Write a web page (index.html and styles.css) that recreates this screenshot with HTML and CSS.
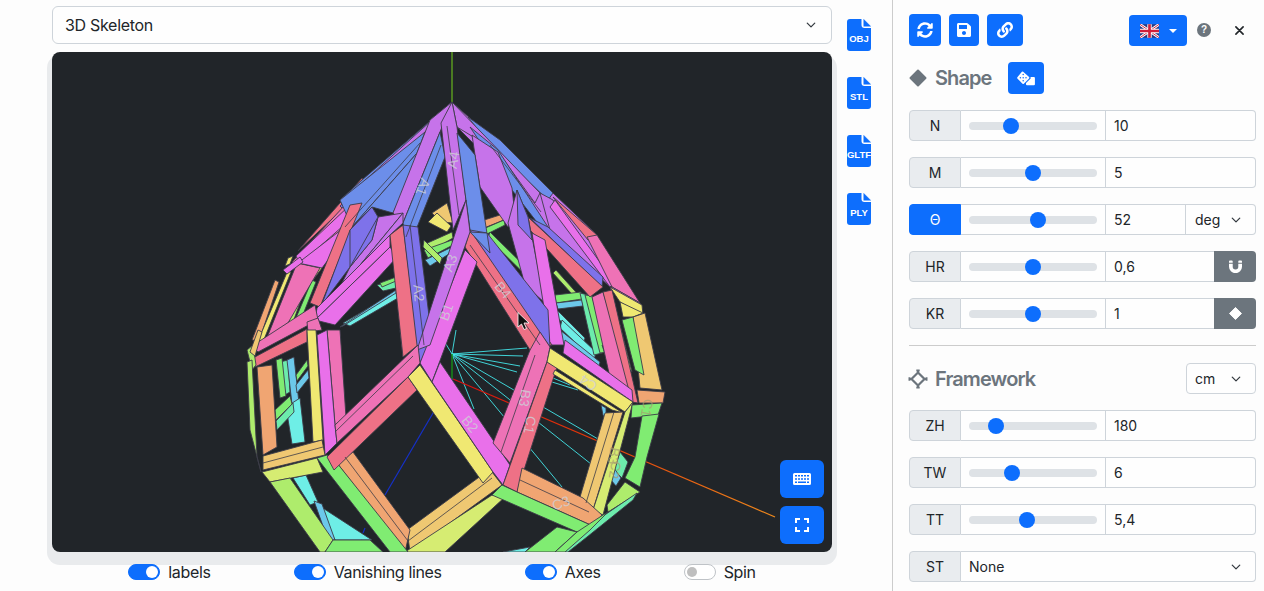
FILE: index.html
```html
<!DOCTYPE html>
<html lang="en">
<head>
<meta charset="utf-8">
<title>3D Skeleton</title>
<link rel="stylesheet" href="styles.css">
</head>
<body>
<main class="stage">
  <section class="viewer">
    <select class="form-select"><option>3D Skeleton</option></select>
    <div class="canvas">
      <svg class="scene" viewBox="52 52 780 500" xmlns="http://www.w3.org/2000/svg">
        <defs>
          <linearGradient id="xaxis" gradientUnits="userSpaceOnUse" x1="453" y1="379" x2="775" y2="517">
            <stop offset="0" stop-color="#d80d0d"/><stop offset=".45" stop-color="#e23a08"/><stop offset="1" stop-color="#ef8a1c"/>
          </linearGradient>
        </defs>
        <line class="ax-g" x1="452" y1="52" x2="452" y2="102"/>
        <g class="beams">
          <!-- far side of the skeleton -->
          <polygon class="y" points="432,213 447,203 453,223 440,222"/>
          <polygon class="e" points="428,222 437,213 451,226 447,232"/>
          <polygon class="o" points="375,228 385,225 388,232 378,236"/>
          <polygon class="e" points="373,238 378,233 380,240 375,244"/>
          <polygon class="e" points="390,208 398,199 400,203 393,212"/>
          <polygon class="n" points="423,245 452,232 453,238 427,253"/>
          <polygon class="r" points="424,250 452,240 453,245 428,258"/>
          <polygon class="u" points="425,260 452,247 452,252 430,266"/>
          <polygon class="n" points="424,240 442,258 440,264 423,247"/>
          <polygon class="t" points="377,285 396,280 396,288 383,291"/>
          <polygon class="r" points="380,283 396,277 396,281 382,287"/>
          <polygon class="c" points="343,323 396,292 398,298 350,326"/>
          <polygon class="u" points="340,327 396,290 396,293 343,326"/>
          <polygon class="o" points="310,262 328,252 330,257 312,268"/>
          <polygon class="e" points="306,278 320,262 322,268 310,284"/>
          <polygon class="n" points="288,323 306,272 310,275 292,325"/>
          <polygon class="r" points="293,325 312,280 316,282 298,327"/>
          <polygon class="o" points="478,222 503,214 504,220 484,228"/>
          <polygon class="r" points="483,229 504,220 505,225 487,234"/>
          <polygon class="r" points="490,232 556,297 553,302 488,238"/>
          <polygon class="n" points="556,270 583,300 580,303 553,273"/>
          <polygon class="r" points="555,295 581,292 582,299 556,303"/>
          <polygon class="u" points="556,303 582,300 583,306 558,309"/>
          <polygon class="c" points="557,310 585,338 583,345 555,315"/>
          <polygon class="c" points="562,320 596,352 594,360 560,328"/>
          <polygon class="u" points="560,330 600,362 598,370 558,340"/>
          <polygon class="t" points="580,293 592,296 606,352 594,355"/>
          <polygon class="r" points="585,295 592,296 607,352 600,353"/>
          <polygon class="u" points="602,345 612,355 622,395 615,385"/>
          <polygon class="t" points="608,330 620,335 632,390 622,390"/>
          <polygon class="n" points="600,320 620,325 632,372 610,350"/>
          <polygon class="u" points="601,405 606,408 606,420 603,415"/>
          <polygon class="t" points="620,452 628,462 622,478 614,470"/>
          <polygon class="u" points="614,468 621,478 616,486 611,480"/>
          <polygon class="t" points="280,362 288,360 290,392 283,396"/>
          <polygon class="r" points="276,360 282,358 286,396 280,398"/>
          <polygon class="u" points="287,360 294,357 303,440 296,440"/>
          <polygon class="c" points="286,407 300,398 305,442 292,444"/>
          <polygon class="r" points="275,410 290,396 292,404 276,420"/>
          <polygon class="t" points="276,421 293,403 294,412 277,430"/>
          <polygon class="u" points="296,385 308,370 309,378 297,393"/>
          <polygon class="r" points="296,375 307,360 308,366 297,381"/>
          <polygon class="c" points="293,478 306,475 318,502 310,505"/>
          <polygon class="c" points="315,503 372,540 335,540"/>
          <polygon class="u" points="314,501 322,504 335,540 328,540"/>
          <polygon class="c" points="503,552 530,547 525,552"/>
          <polygon class="u" points="355,545 362,540 366,552 358,552"/>
        </g>
        <g class="vlines">
          <line x1="452" y1="354" x2="527" y2="348"/>
          <line x1="452" y1="354" x2="523" y2="356"/>
          <line x1="452" y1="354" x2="520" y2="366"/>
          <line x1="452" y1="354" x2="517" y2="372"/>
          <line x1="452" y1="354" x2="598" y2="439"/>
          <line x1="452" y1="354" x2="591" y2="464"/>
          <line x1="452" y1="354" x2="562" y2="487"/>
          <line x1="452" y1="354" x2="474" y2="409"/>
          <line x1="452" y1="354" x2="456" y2="330"/>
          <line x1="452" y1="354" x2="438" y2="331"/>
          <line x1="552" y1="382" x2="578" y2="390"/>
          <line x1="548" y1="376" x2="570" y2="385"/>
        </g>
        <line class="ax-g2" x1="452" y1="354" x2="452" y2="379"/>
        <line class="ax-b" x1="453" y1="379" x2="385" y2="495"/>
        <line class="ax-b" x1="365" y1="528" x2="363" y2="533"/>
        <line class="ax-r" x1="453" y1="379" x2="775" y2="517"/>
        <g class="beams">
          <!-- outer shell, upper left -->
          <polygon class="s" points="303,245 362,178 367,186 298,251"/>
          <polygon class="b" points="452,102 362,180 340,200 352,227 417,153 430,120"/>
          <polygon class="p" points="452,102 425,132 368,190 345,203 362,183"/>
          <polygon class="v" points="340,206 365,183 370,192 348,214"/>
          <polygon class="k" points="292,262 345,205 350,226 298,268"/>
          <polygon class="m" points="296,256 350,205 352,218 300,264"/>
          <polygon class="o" points="252,340 275,280 279,282 259,341"/>
          <polygon class="e" points="258,341 288,270 291,272 263,342"/>
          <polygon class="k" points="266,340 297,263 320,268 288,323"/>
          <polygon class="m" points="298,263 350,223 352,228 322,268"/>
          <polygon class="m" points="283,270 300,257 303,262 287,274"/>
          <polygon class="e" points="288,258 293,256 290,264 285,266"/>
          <!-- long blue and purple beams to the apex -->
          <polygon class="b" points="340,200 425,132 417,153 352,227"/>
          <polygon class="b" points="352,227 417,153 413,170 393,213 372,207"/>
          <polygon class="p" points="452,102 430,120 393,213 403,223 440,132"/>
          <polygon class="b" points="440,132 403,223 408,250 445,157"/>
          <polygon class="s" points="310,303 350,205 362,203 320,307"/>
          <polygon class="p" points="350,267 372,240 378,217 403,213 337,293"/>
          <polygon class="v" points="317,317 350,230 372,207 378,217 372,240 350,267 320,307"/>
          <polygon class="v" points="350,230 372,207 378,217 350,267"/>
          <polygon class="p" points="337,293 403,213 403,223 390,235 340,297"/>
          <polygon class="m" points="315,320 390,247 397,257 335,325"/>
          <polygon class="m" points="317,308 390,235 390,247 315,320"/>
          <polygon class="k" points="252,346 315,305 318,320 258,352"/>
          <polygon class="s" points="253,358 307,329 307,342 255,367"/>
          <polygon class="k" points="307,322 318,318 322,330 308,332"/>
          <!-- right shoulder -->
          <polygon class="p" points="452,102 553,193 597,235 610,287 540,222 490,160 457,127"/>
          <polygon class="b" points="468,117 500,140 553,193 548,200 490,145"/>
          <polygon class="p" points="452,102 540,193 535,203 498,152 457,127"/>
          <polygon class="b" points="470,127 498,150 548,227 543,230 512,190"/>
          <polygon class="s" points="553,197 597,235 588,240 557,202"/>
          <polygon class="p" points="540,193 553,200 603,277 600,278 550,230"/>
          <polygon class="m" points="555,200 615,283 610,287 550,207"/>
          <polygon class="k" points="587,237 597,235 640,303 612,287"/>
          <polygon class="m" points="612,287 640,303 642,308 610,289"/>
          <polygon class="v" points="548,227 603,277 602,287 530,218"/>
          <polygon class="s" points="528,217 603,287 590,297 530,230"/>
          <polygon class="p" points="472,135 498,152 512,188 515,215 508,227 480,187 475,155"/>
          <polygon class="p" points="517,190 528,217 545,303 525,285 508,223"/>
          <polygon class="v" points="517,190 528,217 532,240 518,225"/>
          <polygon class="m" points="532,233 545,240 564,345 550,345"/>
          <polygon class="e" points="610,287 642,305 643,315 620,302"/>
          <polygon class="e" points="620,302 643,313 633,317 623,317"/>
          <polygon class="y" points="633,317 645,313 662,390 640,388"/>
          <polygon class="k" points="592,297 603,292 636,400 615,400"/>
          <polygon class="s" points="603,292 612,290 638,403 632,402"/>
          <polygon class="r" points="622,320 633,317 644,375 635,370"/>
          <!-- centre beams -->
          <polygon class="k" points="400,330 417,330 417,345 403,357"/>
          <polygon class="s" points="390,235 403,225 418,345 403,357"/>
          <polygon class="v" points="403,225 418,227 432,340 420,363 417,345"/>
          <polygon class="p" points="452,102 441,123 453,230 466,200 457,127"/>
          <polygon class="b" points="457,133 475,155 490,253 470,230"/>
          <polygon class="s" points="465,247 470,230 552,345 530,350"/>
          <polygon class="v" points="470,230 487,233 548,310 550,347"/>
          <polygon class="b" points="470,232 490,253 487,233"/>
          <polygon class="m" points="420,363 465,250 477,262 432,382"/>
          <polygon class="p" points="417,350 466,200 470,232 430,345"/>
          <!-- lower lattice -->
          <polygon class="y" points="407,530 482,475 492,472 502,485 410,552"/>
          <polygon class="l" points="492,495 505,497 445,552 405,552"/>
          <polygon class="o" points="353,452 410,530 405,552 337,463"/>
          <polygon class="r" points="317,458 327,455 337,463 408,552 390,552"/>
          <polygon class="e" points="307,330 316,330 323,440 313,442"/>
          <polygon class="k" points="327,330 340,330 346,417 335,425"/>
          <polygon class="m" points="317,335 327,330 335,425 337,443 325,455"/>
          <polygon class="k" points="335,425 418,345 420,363 408,377 337,443"/>
          <polygon class="s" points="327,457 408,377 417,390 334,470"/>
          <polygon class="e" points="408,377 420,365 493,472 483,483"/>
          <polygon class="m" points="432,382 440,362 510,465 503,485 493,472"/>
          <polygon class="k" points="540,332 550,347 547,362 510,463 493,443 530,350"/>
          <polygon class="s" points="547,362 557,367 517,492 503,485"/>
          <polygon class="m" points="565,340 632,390 633,402 563,353"/>
          <polygon class="e" points="550,348 633,402 625,412 547,362"/>
          <polygon class="e" points="555,370 623,413 612,410 553,374"/>
          <polygon class="y" points="605,413 623,412 593,510 580,497"/>
          <polygon class="l" points="625,412 633,402 603,515 593,510"/>
          <polygon class="o" points="522,468 583,498 602,515 595,527 517,492"/>
          <polygon class="r" points="502,485 517,492 595,527 577,532 492,495"/>
          <polygon class="o" points="637,390 665,392 663,403 639,403"/>
          <polygon class="r" points="632,405 662,403 658,415 631,418"/>
          <polygon class="r" points="642,416 659,414 647,457 640,487 625,478 635,457"/>
          <polygon class="n" points="625,482 640,492 608,512 607,505"/>
          <polygon class="r" points="525,552 557,527 577,532 555,552"/>
          <polygon class="t" points="555,552 587,527 637,493 633,500 587,537 568,552"/>
          <polygon class="r" points="577,532 603,515 608,512 590,530 565,552 555,552"/>
          <!-- left side -->
          <polygon class="n" points="247,350 253,345 256,365 252,370"/>
          <polygon class="y" points="250,352 258,330 262,332 255,356"/>
          <polygon class="n" points="247,362 252,360 257,457 261,472 250,430"/>
          <polygon class="o" points="257,367 272,365 277,447 263,455"/>
          <polygon class="y" points="263,456 322,440 325,455 263,470"/>
          <polygon class="l" points="262,472 317,458 323,472 270,482"/>
          <polygon class="n" points="270,482 290,478 333,540 325,552 320,552"/>
          <polygon class="r" points="333,540 370,540 383,552 325,552"/>
        </g>
        <g class="seams">
          <line x1="345" y1="457" x2="408" y2="541"/>
          <line x1="408" y1="541" x2="492" y2="478"/>
          <line x1="535" y1="355" x2="501" y2="452"/>
          <line x1="520" y1="480" x2="589" y2="512"/>
          <line x1="614" y1="412" x2="586" y2="503"/>
          <line x1="447" y1="126" x2="459" y2="215"/>
          <line x1="441" y1="145" x2="406" y2="237"/>
          <line x1="410" y1="225" x2="424" y2="345"/>
          <line x1="263" y1="463" x2="323" y2="447"/>
          <line x1="470" y1="245" x2="540" y2="345"/>
          <line x1="345" y1="227" x2="420" y2="143"/>
          <line x1="490" y1="145" x2="541" y2="212"/>
          <line x1="335" y1="432" x2="413" y2="356"/>
        </g>
        <g class="tags">
          <text transform="translate(453,160) rotate(-80)">A4</text>
          <text transform="translate(423,187) rotate(110)">A1</text>
          <text transform="translate(419,293) rotate(85)">A2</text>
          <text transform="translate(450,263) rotate(-70)">A3</text>
          <text transform="translate(446,312) rotate(-70)">B1</text>
          <text transform="translate(503,290) rotate(50)">B4</text>
          <text transform="translate(525,398) rotate(100)">B3</text>
          <text transform="translate(530,425) rotate(100)">C1</text>
          <text transform="translate(470,424) rotate(50)">B2</text>
          <text transform="translate(588,383) rotate(215)">C4</text>
          <text transform="translate(561,503) rotate(-20)">C3</text>
          <text class="dim" transform="translate(614,456) rotate(100)">B3</text>
          <text class="dim" transform="translate(615,470) rotate(100)">C2</text>
          <text class="dim" transform="translate(647,408) rotate(100)">C1</text>
        </g>
        <path class="cursor" d="M518 312.500 V327 L521.500 324 L524 329.500 L526.500 328.500 L524 323 H529 Z"/>
      </svg>
      <div class="canvas-tools">
        <button class="btn btn-tool" type="button" aria-label="Keyboard">
          <svg class="ic-kb" viewBox="0 0 18 12"><path d="M1.500 0h15A1.500 1.500 0 0 1 18 1.500v9a1.500 1.500 0 0 1-1.500 1.500h-15A1.500 1.500 0 0 1 0 10.500v-9A1.500 1.500 0 0 1 1.500 0zM2 2v1.500h2V2zm3 0v1.500h2V2zm3 0v1.500h2V2zm3 0v1.500h2V2zm3 0v1.500h2V2zM2 5.200v1.500h2V5.200zm3 0v1.500h2V5.200zm3 0v1.500h2V5.200zm3 0v1.500h2V5.200zm3 0v1.500h2V5.200zM2 8.400v1.500h2V8.400zm3 0v1.500h8V8.400zm9 0v1.500h2V8.400z" fill-rule="evenodd"/></svg>
        </button>
        <button class="btn btn-tool" type="button" aria-label="Fullscreen">
          <svg class="ic-fs" viewBox="0 0 14 14"><path d="M0 0h5v2H2v3H0zM9 0h5v5h-2V2H9zM0 9h2v3h3v2H0zM12 9h2v5H9v-2h3z"/></svg>
        </button>
      </div>
    </div>
    <div class="toggles">
      <label class="switch"><input type="checkbox" checked><span>labels</span></label>
      <label class="switch"><input type="checkbox" checked><span>Vanishing lines</span></label>
      <label class="switch"><input type="checkbox" checked><span>Axes</span></label>
      <label class="switch"><input type="checkbox"><span>Spin</span></label>
    </div>
  </section>
  <aside class="downloads">
    <svg class="file" viewBox="0 0 24 32"><path class="file-body" d="M3 0h13.500L24 7.500V29a3 3 0 0 1-3 3H3a3 3 0 0 1-3-3V3a3 3 0 0 1 3-3z"/><path class="file-fold" d="M14.500 0v6a3 3 0 0 0 3 3H24V7.500L16.500 0z"/><path class="file-body" d="M16.500 0 24 7.500h-7.500z"/><text x="12" y="23">OBJ</text></svg>
    <svg class="file" viewBox="0 0 24 32"><path class="file-body" d="M3 0h13.500L24 7.500V29a3 3 0 0 1-3 3H3a3 3 0 0 1-3-3V3a3 3 0 0 1 3-3z"/><path class="file-fold" d="M14.500 0v6a3 3 0 0 0 3 3H24V7.500L16.500 0z"/><path class="file-body" d="M16.500 0 24 7.500h-7.500z"/><text x="12" y="23">STL</text></svg>
    <svg class="file" viewBox="0 0 24 32"><path class="file-body" d="M3 0h13.500L24 7.500V29a3 3 0 0 1-3 3H3a3 3 0 0 1-3-3V3a3 3 0 0 1 3-3z"/><path class="file-fold" d="M14.500 0v6a3 3 0 0 0 3 3H24V7.500L16.500 0z"/><path class="file-body" d="M16.500 0 24 7.500h-7.500z"/><text x="12" y="23">GLTF</text></svg>
    <svg class="file" viewBox="0 0 24 32"><path class="file-body" d="M3 0h13.500L24 7.500V29a3 3 0 0 1-3 3H3a3 3 0 0 1-3-3V3a3 3 0 0 1 3-3z"/><path class="file-fold" d="M14.500 0v6a3 3 0 0 0 3 3H24V7.500L16.500 0z"/><path class="file-body" d="M16.500 0 24 7.500h-7.500z"/><text x="12" y="23">PLY</text></svg>
  </aside>
</main>
<aside class="panel">
  <div class="topbar">
    <button class="btn btn-sync" type="button" aria-label="Reload"><svg class="ic" viewBox="0 0 512 512"><path d="M370.720 133.280C339.458 104.008 298.888 87.962 255.848 88c-77.458.068-144.328 53.178-162.791 126.850-1.344 5.363-6.122 9.150-11.651 9.150H24.103c-7.498 0-13.194-6.807-11.807-14.176C33.933 94.924 134.813 8 256 8c66.448 0 126.791 26.136 171.315 68.685L463.030 40.970C478.149 25.851 504 36.559 504 57.941V192c0 13.255-10.745 24-24 24H345.941c-21.382 0-32.090-25.851-16.971-40.971l41.750-41.749zM32 296h134.059c21.382 0 32.090 25.851 16.971 40.971l-41.750 41.750c31.262 29.273 71.835 45.319 114.876 45.280 77.418-.07 144.315-53.144 162.787-126.849 1.344-5.363 6.122-9.150 11.651-9.150h57.304c7.498 0 13.194 6.807 11.807 14.176C478.067 417.076 377.187 504 256 504c-66.448 0-126.791-26.136-171.315-68.685L48.970 471.030C33.851 486.149 8 475.441 8 454.059V320c0-13.255 10.745-24 24-24z"/></svg></button>
    <button class="btn btn-save" type="button" aria-label="Save"><svg class="ic" viewBox="0 0 448 512"><path d="M433.941 129.941l-83.882-83.882A48 48 0 0 0 316.118 32H48C21.490 32 0 53.490 0 80v352c0 26.510 21.490 48 48 48h352c26.510 0 48-21.490 48-48V163.882a48 48 0 0 0-14.059-33.941zM224 416c-35.346 0-64-28.654-64-64 0-35.346 28.654-64 64-64s64 28.654 64 64c0 35.346-28.654 64-64 64zm96-304.520V212c0 6.627-5.373 12-12 12H76c-6.627 0-12-5.373-12-12V108c0-6.627 5.373-12 12-12h228.520c3.183 0 6.235 1.264 8.485 3.515l3.480 3.480A11.996 11.996 0 0 1 320 111.480z"/></svg></button>
    <button class="btn btn-link" type="button" aria-label="Link"><svg class="ic" viewBox="0 0 512 512"><path d="M326.612 185.391c59.747 59.809 58.927 155.698.36 214.590-.11.120-.24.250-.36.370l-67.200 67.200c-59.270 59.270-155.699 59.262-214.960 0-59.270-59.260-59.270-155.700 0-214.960l37.106-37.106c9.840-9.840 26.786-3.300 27.294 10.606.648 17.722 3.826 35.527 9.690 52.721 1.986 5.822.567 12.262-3.783 16.612l-13.087 13.087c-28.026 28.026-28.905 73.660-1.155 101.960 28.024 28.579 74.086 28.749 102.325.510l67.200-67.190c28.191-28.191 28.073-73.757 0-101.830-3.701-3.694-7.429-6.564-10.341-8.569a16.037 16.037 0 0 1-6.947-12.606c-.396-10.567 3.348-21.456 11.698-29.806l21.054-21.055c5.521-5.521 14.182-6.199 20.584-1.731a152.482 152.482 0 0 1 20.522 17.197zM467.547 44.449c-59.261-59.262-155.690-59.270-214.960 0l-67.200 67.200c-.12.120-.25.250-.36.370-58.566 58.892-59.387 154.781.36 214.590a152.454 152.454 0 0 0 20.521 17.196c6.402 4.468 15.064 3.789 20.584-1.731l21.054-21.055c8.350-8.350 12.094-19.239 11.698-29.806a16.037 16.037 0 0 0-6.947-12.606c-2.912-2.005-6.640-4.875-10.341-8.569-28.073-28.073-28.191-73.639 0-101.830l67.200-67.190c28.239-28.239 74.300-28.069 102.325.510 27.750 28.300 26.872 73.934-1.155 101.960l-13.087 13.087c-4.350 4.350-5.769 10.790-3.783 16.612 5.864 17.194 9.042 34.999 9.690 52.721.509 13.906 17.454 20.446 27.294 10.606l37.106-37.106c59.271-59.259 59.271-155.699.001-214.959z"/></svg></button>
    <button class="btn btn-lang" type="button" aria-label="Language">
      <svg class="flag" viewBox="0 0 20 14"><rect width="20" height="14" rx="1" fill="#283a80"/><path d="M0 0l20 14M20 0 0 14" stroke="#fff" stroke-width="2.800"/><path d="M0 0l20 14M20 0 0 14" stroke="#cf1f3c" stroke-width="1"/><path d="M10 0v14M0 7h20" stroke="#fff" stroke-width="4.600"/><path d="M10 0v14M0 7h20" stroke="#cf1f3c" stroke-width="2.800"/></svg>
      <span class="caret"></span>
    </button>
    <span class="help">?</span>
    <svg class="close" viewBox="0 0 10 10"><path d="M1 1l8 8M9 1 1 9"/></svg>
  </div>
  <div class="heading">
    <svg class="h-ic" viewBox="0 0 18 18"><path d="M9 1.500 16.500 9 9 16.500 1.500 9z" stroke="#6c757d" stroke-width="2" stroke-linejoin="round"/></svg>
    <h2>Shape</h2>
    <button class="btn btn-dice" type="button" aria-label="Random">
      <svg class="ic-dice" viewBox="0 0 20 16"><path fill="#fff" fill-rule="evenodd" d="M7 .800 13.300 6.500a1 1 0 0 1 0 1.400L7.700 13.600a1 1 0 0 1-1.400 0L.8 8a1 1 0 0 1 0-1.400L5.600.8a1 1 0 0 1 1.400 0zM7 3a.8.800 0 1 0 0 1.600A.8.800 0 0 0 7 3zM4 6.400A.8.800 0 1 0 4 8a.8.800 0 0 0 0-1.600zM7 6.400A.8.800 0 1 0 7 8a.8.800 0 0 0 0-1.600zM10 6.400a.8.800 0 1 0 0 1.600.8.800 0 0 0 0-1.600zM7 9.700a.8.800 0 1 0 0 1.600.8.800 0 0 0 0-1.600z"/><path fill="#fff" d="M14.500 6.500h4a1 1 0 0 1 1 1v6.700a1 1 0 0 1-1 1H11a1 1 0 0 1-1-1V12.800l4.700-4.600c.6-.5.6-1.100-.2-1.700z"/></svg>
    </button>
  </div>
  <div class="field"><span class="tag">N</span><span class="slide"><input type="range" min="0" max="1000" value="304"></span><input class="val" type="text" value="10"></div>
  <div class="field"><span class="tag">M</span><span class="slide"><input type="range" min="0" max="1000" value="500"></span><input class="val" type="text" value="5"></div>
  <div class="field"><span class="tag tag-on">Θ</span><span class="slide"><input type="range" min="0" max="1000" value="545"></span><input class="val val-s" type="text" value="52"><select class="unit unit-in"><option>deg</option></select></div>
  <div class="field"><span class="tag">HR</span><span class="slide"><input type="range" min="0" max="1000" value="500"></span><input class="val val-m" type="text" value="0,6"><button class="side" type="button" aria-label="Magnet"><svg class="ic-side" viewBox="0 0 14 14"><path d="M0 1.500A1 1 0 0 1 1 .5h2a1 1 0 0 1 1 1V3H0zM10 1.500a1 1 0 0 1 1-1h2a1 1 0 0 1 1 1V3h-4zM0 4h4v3.200a3 3 0 0 0 6 0V4h4v3.200a7 7 0 0 1-14 0z"/></svg></button></div>
  <div class="field"><span class="tag">KR</span><span class="slide"><input type="range" min="0" max="1000" value="500"></span><input class="val val-m" type="text" value="1"><button class="side" type="button" aria-label="Diamond"><svg class="ic-side" viewBox="0 0 14 14"><path d="M7 .500 13.500 7 7 13.500.5 7z" stroke="#fff" stroke-width="1" stroke-linejoin="round"/></svg></button></div>
  <hr class="rule">
  <div class="heading heading-fw">
    <svg class="h-ic h-fw" viewBox="0 0 20 20"><path d="M10 3.500 16.500 10 10 16.500 3.500 10z" fill="none" stroke-width="2.200"/><path d="M10 1v3M8.300 1.500h3.400M10 16v3M8.300 18.500h3.400M1 10h3M1.500 8.300v3.400M16 10h3M18.500 8.300v3.400" fill="none" stroke-width="2"/></svg>
    <h2>Framework</h2>
    <select class="unit unit-out"><option>cm</option></select>
  </div>
  <div class="field"><span class="tag">ZH</span><span class="slide"><input type="range" min="0" max="1000" value="170"></span><input class="val" type="text" value="180"></div>
  <div class="field"><span class="tag">TW</span><span class="slide"><input type="range" min="0" max="1000" value="312"></span><input class="val" type="text" value="6"></div>
  <div class="field"><span class="tag">TT</span><span class="slide"><input type="range" min="0" max="1000" value="446"></span><input class="val" type="text" value="5,4"></div>
  <div class="field"><span class="tag">ST</span><select class="wide"><option>None</option></select></div>
</aside>
</body>
</html>
```
FILE: styles.css
```css
* { box-sizing: border-box; }
html, body { height: 100%; }
body {
  margin: 0;
  display: flex;
  height: 591px;
  overflow: hidden;
  background: #fdfdfd;
  color: #212529;
  font: 14px/1.5 Inter, "Liberation Sans", sans-serif;
}
button, input, select { font: inherit; color: inherit; }

.stage { width: 892px; flex: none; display: flex; padding: 6px 0 0 52px; }
.viewer { width: 780px; flex: none; display: flex; flex-direction: column; }
.form-select, .unit, .wide {
  appearance: none;
  background: #fefefe url("data:image/svg+xml,%3csvg xmlns='http://www.w3.org/2000/svg' viewBox='0 0 16 16'%3e%3cpath fill='none' stroke='%23343a40' stroke-linecap='round' stroke-linejoin='round' stroke-width='2' d='M2 5l6 6 6-6'/%3e%3c/svg%3e") no-repeat right 13px center / 12px 10px;
  border: 1px solid #ced4da;
  outline: none;
}
.form-select {
  height: 38px;
  flex: none;
  border-radius: 6px;
  padding: 0 12px;
  font-size: 16px;
  letter-spacing: -.3px;
  background-position: right 14px center;
}
.canvas {
  position: relative;
  height: 500px;
  flex: none;
  margin-top: 8px;
  background: #212529;
  border-radius: 8px;
  box-shadow: 0 8px 0 5px #e9ebed;
}
.scene { display: block; width: 780px; height: 500px; border-radius: 8px; }
.ax-g { stroke: #5a9a20; stroke-width: 1.5; }
.ax-g2 { stroke: #168a18; stroke-width: 1.5; }
.ax-b { stroke: #1530c8; stroke-width: 1.2; }
.ax-r { stroke: url(#xaxis); stroke-width: 1.2; }
.vlines line { stroke: #44e6ea; stroke-width: .9; }
.beams polygon { stroke: #3c3c48; stroke-width: .9; stroke-linejoin: round; }
.seams line { stroke: #3c3c48; stroke-width: .8; }
.p { fill: #c673ea; }
.b { fill: #6c8eea; }
.v { fill: #7e72ea; }
.m { fill: #e970ea; }
.s { fill: #ee7186; }
.k { fill: #ee72b6; }
.o { fill: #f0a572; }
.y { fill: #efc872; }
.e { fill: #f0e872; }
.l { fill: #d6ec72; }
.n { fill: #aeec6c; }
.r { fill: #80ec72; }
.t { fill: #6cecac; }
.c { fill: #6eeee6; }
.u { fill: #6cc8ea; }
.tags text {
  font: 14px "Liberation Sans", sans-serif;
  fill: #cfcfd6;
  opacity: .8;
  text-anchor: middle;
  dominant-baseline: central;
}
.tags .dim { fill: #a8a070; opacity: .75; }
.cursor { fill: #111; stroke: #fff; stroke-width: .8; }

.canvas-tools {
  position: absolute;
  right: 8px;
  bottom: 8px;
  display: flex;
  flex-direction: column;
  gap: 8px;
}
.btn {
  display: flex;
  align-items: center;
  justify-content: center;
  padding: 0;
  border: 0;
  background: #0d6efd;
  border-radius: 4px;
  flex: none;
}
.btn-tool { width: 44px; height: 38px; border-radius: 6px; }
.ic-kb { width: 18px; height: 12px; fill: #fff; }
.ic-fs { width: 14px; height: 14px; fill: #fff; }

.toggles { display: flex; justify-content: center; gap: 83px; margin-top: 12px; }
.switch { display: flex; align-items: center; gap: 8px; font-size: 16px; line-height: 16px; letter-spacing: -.33px; }
.switch input {
  appearance: none;
  width: 32px;
  height: 16px;
  margin: 0;
  border-radius: 8px;
  border: 1px solid #bfc3c7;
  background: #fff;
  position: relative;
}
.switch input::after {
  content: "";
  position: absolute;
  left: 2px;
  top: 2px;
  width: 10px;
  height: 10px;
  border-radius: 50%;
  background: #bfbfbf;
}
.switch input:checked { background: #0d6efd; border-color: #0d6efd; }
.switch input:checked::after { left: auto; right: 1px; top: 1px; width: 12px; height: 12px; background: #fff; }

.downloads { display: flex; flex-direction: column; gap: 26px; margin: 13px 0 0 15px; }
.file { width: 24px; height: 32px; display: block; }
.file-body { fill: #0d6efd; }
.file-fold { fill: #fff; }
.file text {
  font: 700 9.5px "Liberation Sans", sans-serif;
  fill: #fff;
  text-anchor: middle;
}

.panel {
  width: 372px;
  flex: none;
  min-width: 0;
  border-left: 1px solid #ccc;
  padding: 14px 8px 0 16px;
  display: flex;
  flex-direction: column;
  gap: 16px;
}
.topbar { display: flex; align-items: center; height: 32px; }
.btn-sync { width: 32px; height: 32px; }
.btn-save { width: 30px; height: 32px; margin-left: 8px; }
.btn-link { width: 36px; height: 32px; margin-left: 8px; }
.btn-lang { width: 58px; height: 31px; margin-left: auto; margin-top: 1px; gap: 10px; }
.ic { width: 16px; height: 16px; fill: #fff; }
.flag { width: 19px; height: 14px; display: block; }
.caret { width: 0; height: 0; border: 4px solid transparent; border-top-color: #fff; border-bottom: 0; }
.help {
  width: 14px;
  height: 14px;
  flex: none;
  margin-left: 10px;
  border-radius: 50%;
  background: #6c757d;
  color: #fff;
  font: 700 10px/14px "Liberation Sans", sans-serif;
  text-align: center;
}
.close { width: 9px; height: 9px; flex: none; margin-left: 24px; margin-right: 12px; stroke: #212529; stroke-width: 1.8; stroke-linecap: round; fill: none; }

.heading { display: flex; align-items: center; height: 32px; }
.heading h2 {
  margin: 0 0 0 8px;
  font-size: 20px;
  line-height: 32px;
  font-weight: 600;
  color: #6c757d;
  letter-spacing: -.9px;
}
.h-ic { width: 18px; height: 18px; fill: #6c757d; flex: none; }
.btn-dice { width: 36px; height: 32px; margin-left: 16px; }
.ic-dice { width: 20px; height: 15px; }
.heading-fw { margin-top: 1px; height: 31px; }
.h-fw { width: 20px; height: 20px; margin-left: -1px; margin-right: -1px; fill: none; stroke: #6c757d; }
.unit {
  height: 31px;
  border-radius: 4px;
  padding: 0 8px;
  font-size: 14px;
  background-position: right 13px center;
}
.unit-out { width: 70px; margin-left: auto; flex: none; }
.unit-in { width: 70px; flex: none; border-left: 0; border-radius: 0 4px 4px 0; padding-left: 9px; }

.field { display: flex; height: 31px; flex: none; }
.tag {
  width: 52px;
  flex: none;
  display: flex;
  align-items: center;
  justify-content: center;
  background: #e9ecef;
  border: 1px solid #ced4da;
  border-radius: 4px 0 0 4px;
  font-size: 14px;
}
.tag-on { background: #0d6efd; border-color: #0d6efd; color: #fff; }
.slide {
  width: 145px;
  flex: none;
  display: flex;
  align-items: center;
  padding: 0 8px;
  border: 1px solid #ced4da;
  border-left: 0;
  background: #fefefe;
}
.slide input { appearance: none; width: 128px; height: 16px; margin: 0; background: transparent; display: block; }
.slide input::-webkit-slider-runnable-track { height: 8px; border-radius: 4px; background: #dee2e6; }
.slide input::-webkit-slider-thumb {
  appearance: none;
  width: 16px;
  height: 16px;
  margin-top: -4px;
  border-radius: 50%;
  background: #0d6efd;
}
.val {
  flex: 1;
  width: 0;
  min-width: 0;
  border: 1px solid #ced4da;
  border-left: 0;
  border-radius: 0 4px 4px 0;
  padding: 0 8px;
  background: #fefefe;
  font-size: 14px;
  outline: none;
}
.val-s { border-radius: 0; border-right: 1px solid #ced4da; }
.val-m { border-radius: 0; border-right: 0; }
.side {
  width: 42px;
  flex: none;
  padding: 0;
  border: 0;
  background: #6c757d;
  border-radius: 0 4px 4px 0;
  display: flex;
  align-items: center;
  justify-content: center;
}
.ic-side { width: 13px; height: 13px; fill: #fff; }
.wide {
  flex: 1;
  width: 0;
  border-left: 0;
  border-radius: 0 4px 4px 0;
  padding: 0 8px;
  font-size: 14px;
}
.rule { width: 100%; margin: 0; border: 0; border-top: 1px solid #ccc; height: 1px; flex: none; }
```
